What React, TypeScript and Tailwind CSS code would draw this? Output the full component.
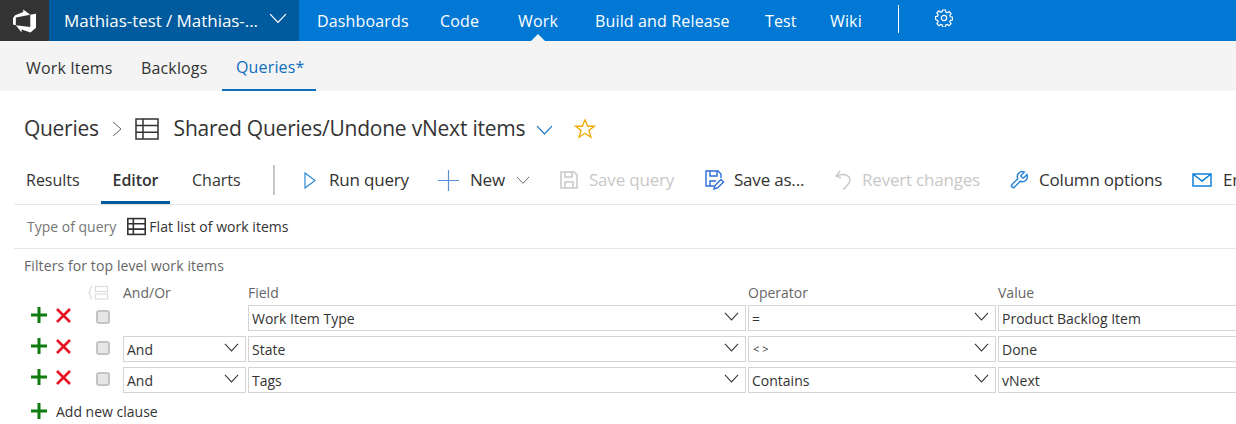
import React from "react";

const font = { fontFamily: '"Open Sans", "Noto Sans", sans-serif' };

function Chevron({ className = "", w = 16, color = "#333" }: { className?: string; w?: number; color?: string }) {
  return (
    <svg className={`shrink-0 ${className}`} width={w} height={w * 0.6} viewBox="0 0 16 9.6" fill="none" stroke={color} strokeWidth="1.1">
      <path d="M1 1 L8 8.4 L15 1" />
    </svg>
  );
}

function GridIcon({ size = 24, color = "#333" }: { size?: number; color?: string }) {
  return (
    <svg className="block" width={size} height={size} viewBox="0 0 24 24" fill="none" stroke={color} strokeWidth={size > 20 ? 1.5 : 2}>
      <rect x="1" y="2" width="22" height="20" />
      <path d="M1 8.6H23M1 15.3H23M8 2V22" />
    </svg>
  );
}

function Logo() {
  return (
    <svg width="23" height="24" viewBox="0 0 24 24" fill="white">
      <path d="M0 8.877L2.247 5.91l8.405-3.416V.022l7.37 5.393L2.966 8.338v8.225L0 15.707zm24-4.45v14.651l-5.753 4.9-9.303-3.057v3.056l-5.978-7.416 15.057 1.798V5.415z" />
    </svg>
  );
}

function Gear() {
  return (
    <svg className="block" width="18" height="18" viewBox="0 0 18 18" fill="none" stroke="white" strokeWidth="1.2">
      <circle cx="9" cy="9" r="2.7" />
      <path d="M7.6 1h2.8l.4 2.2 1.4.6 1.9-1.3 2 2-1.3 1.9.6 1.4 2.1.4v2.8l-2.1.4-.6 1.4 1.3 1.9-2 2-1.9-1.3-1.4.6-.4 2.1H7.6l-.4-2.1-1.4-.6-1.9 1.3-2-2 1.3-1.9-.6-1.4L.5 10.4V7.6l2.1-.4.6-1.4-1.3-1.9 2-2 1.9 1.3 1.4-.6z" />
    </svg>
  );
}

function Plus({ size = 16, color = "#107c10", sw = 3 }: { size?: number; color?: string; sw?: number }) {
  return (
    <svg className="block" width={size} height={size} viewBox="0 0 16 16" stroke={color} strokeWidth={sw} fill="none">
      <path d="M8 0V16M0 8H16" />
    </svg>
  );
}

function Cross() {
  return (
    <svg className="block" width="15" height="15" viewBox="0 0 15 15" stroke="#e81123" strokeWidth="2.6" fill="none">
      <path d="M1 1L14 14M14 1L1 14" />
    </svg>
  );
}

function Tool({ icon, label, disabled, w, after }: { icon: React.ReactNode; label: string; disabled?: boolean; w: string; after?: React.ReactNode }) {
  return (
    <div className={`flex items-center shrink-0 ${w}`}>
      {icon}
      <span className={`text-[17px] tracking-[-0.2px] whitespace-nowrap ${disabled ? "text-[#c8c8c8]" : "text-[#333]"}`}>{label}</span>
      {after}
    </div>
  );
}

function Select({ text, w, small }: { text: string; w: string; small?: boolean }) {
  return (
    <div className={`${w} h-[26px] shrink-0 border border-[#d4d4d4] bg-white flex items-center justify-between pl-[3px] pr-[6px]`}>
      <span className={`${small ? "text-[11px] pl-[1px]" : "text-[14px]"} text-[#333] whitespace-nowrap`}>{text}</span>
      <Chevron w={15} className="mb-[4px]" />
    </div>
  );
}

function Row({ first, field, op, value, opSmall }: { first?: boolean; field: string; op: string; value: string; opSmall?: boolean }) {
  return (
    <div className="flex items-center h-[26px] mb-[5px]">
      <div className="w-[47px] shrink-0 flex justify-end pb-[6px]"><Plus size={16} /></div>
      <div className="w-[39px] shrink-0 pl-[9px] pb-[6px]"><Cross /></div>
      <div className="w-[37px] shrink-0 pl-[10px] pb-[2px]">
        <div className="w-[14px] h-[14px] rounded-[3px] border-2 border-[#c4c4c4] bg-[#e6e6e6]" />
      </div>
      {first ? <div className="w-[123px] shrink-0" /> : <Select text="And" w="w-[123px]" />}
      <div className="w-[2px] shrink-0" />
      <Select text={field} w="w-[498px]" />
      <div className="w-[2px] shrink-0" />
      <Select text={op} w="w-[248px]" small={opSmall} />
      <div className="w-[2px] shrink-0" />
      <div className="h-[26px] flex-1 -mr-[10px] border border-[#d4d4d4] flex items-center pl-[3px]">
        <span className="text-[14px] text-[#333] whitespace-nowrap">{value}</span>
      </div>
    </div>
  );
}

const nav = [
  { t: "Dashboards", w: "w-[123px]" },
  { t: "Code", w: "w-[78px]" },
  { t: "Work", w: "w-[77px]" },
  { t: "Build and Release", w: "w-[170px]" },
  { t: "Test", w: "w-[65px]" },
  { t: "Wiki", w: "w-[68px]" },
];

export default function App() {
  return (
    <div style={font} className="w-[1236px] h-[424px] overflow-hidden bg-white">
      <div className="h-[41px] flex bg-[#0078d4] text-white">
        <div className="w-[49px] bg-[#333] flex items-center justify-center"><Logo /></div>
        <div className="w-[250px] bg-[#005a9e] flex items-center pl-[15px] pr-[12px] justify-between">
          <span className="text-[17px] tracking-[-0.05px] whitespace-nowrap">Mathias-test / Mathias-...</span>
          <Chevron w={18} color="white" className="mb-[4px]" />
        </div>
        <div className="flex items-center pl-[18px]">
          {nav.map((n) => (
            <div key={n.t} className={`${n.w} relative h-full flex items-center`}>
              <span className="text-[16px] tracking-[0.15px] whitespace-nowrap">{n.t}</span>
              {n.t === "Work" && (
                <span className="absolute left-[13px] bottom-0 w-0 h-0 border-l-[7px] border-r-[7px] border-b-[7px] border-l-transparent border-r-transparent border-b-[#f4f4f4]" />
              )}
            </div>
          ))}
          <div className="w-px h-[28px] bg-white mb-[3px]" />
          <div className="ml-[36px] mb-[6px]"><Gear /></div>
        </div>
      </div>

      <div className="h-[50px] bg-[#f4f4f4] flex pl-[26px] text-[16px] tracking-[0.15px]">
        <div className="w-[115px] flex items-center pt-[3px] text-[#333]">Work Items</div>
        <div className="w-[81px] flex items-center pt-[3px] text-[#333]">Backlogs</div>
        <div className="w-[94px] flex items-center pl-[14px] pt-[3px] text-[#106ebe] border-b-2 border-[#106ebe]">Queries*</div>
      </div>

      <div className="h-[74px] flex items-center pl-[24px] pt-[1px]">
        <span className="text-[21px] tracking-[-0.3px] text-[#333]">Queries</span>
        <svg className="ml-[13px]" width="10" height="16" viewBox="0 0 10 16" fill="none" stroke="#666" strokeWidth="1"><path d="M1 1L9 8L1 15" /></svg>
        <span className="ml-[13px] mr-[15px]"><GridIcon /></span>
        <span className="text-[21px] tracking-[-0.22px] text-[#333] whitespace-nowrap">Shared Queries/Undone vNext items</span>
        <Chevron className="ml-[11px] mt-[3px]" w={17} color="#106ebe" />
        <svg className="ml-[21px]" width="22" height="22" viewBox="0 0 24 24" fill="none" stroke="#f2a900" strokeWidth="1.4"><path d="M12 2l2.9 7h7.3l-5.9 4.6 2.2 7.4L12 16.6 5.5 21l2.2-7.4L1.8 9h7.3z" /></svg>
      </div>

      <div className="ml-[14px] h-[40px] border-b border-[#e6e6e6] flex items-start">
        <div className="w-[87px] pl-[12px] h-[30px] flex items-center text-[16px] text-[#333]">Results</div>
        <div className="w-[69px] h-[39px] pb-[6px] flex items-center justify-center text-[16px] font-semibold tracking-[-0.1px] text-[#333] border-b-[3px] border-[#005a9e]">Editor</div>
        <div className="w-[103px] pl-[22px] h-[30px] flex items-center text-[16px] text-[#333]">Charts</div>
        <div className="flex items-center h-[30px]">
          <div className="w-[2px] h-[30px] -mt-[1px] bg-[#c8c8c8] mr-[29px] shrink-0" />
          <Tool w="w-[134px]" label="Run query" icon={<svg className="mr-[13px]" width="12" height="17" viewBox="0 0 12 17" fill="none" stroke="#2b88d8" strokeWidth="1.2"><path d="M1 1L11 8.5L1 16Z" /></svg>} />
          <Tool w="w-[122px]" label="New"
            icon={<span className="mr-[11px]"><Plus size={21} color="#5a8fd8" sw={0.9} /></span>}
            after={<Chevron className="ml-[11px]" w={14} color="#666" />} />
          <Tool w="w-[145px]" label="Save query" disabled icon={<svg className="mr-[11px]" width="18" height="18" viewBox="0 0 18 18" fill="none" stroke="#c8c8c8" strokeWidth="1.5"><path d="M1 1H14L17 4V17H1Z" /><path d="M5 1V6H12V1M5 17V11H13V17" /></svg>} />
          <Tool w="w-[129px]" label="Save as..." icon={<svg className="mr-[9px]" width="20" height="20" viewBox="0 0 20 20" fill="none" stroke="#2b6cd8" strokeWidth="1.4"><path d="M9 16H1V1H13L16 4V8" /><path d="M5 1V6H12V1M5 16V11H11" /><path d="M9 19L10 15.5L16 9.5L18.5 12L12.5 18Z" /></svg>} />
          <Tool w="w-[175px]" label="Revert changes" disabled icon={<svg className="mr-[10px]" width="18" height="20" viewBox="0 0 18 20" fill="none" stroke="#c8c8c8" strokeWidth="1.4"><path d="M6 1L2 6L7 8M2 6C9 3 16 5 16 10C16 14 11 17 9 20" /></svg>} />
          <Tool w="w-[183px]" label="Column options" icon={<svg className="mr-[10px]" width="20" height="20" viewBox="0 0 24 24" fill="none" stroke="#2b88d8" strokeWidth="1.8"><path d="M14.7 6.3a1 1 0 0 0 0 1.4l1.6 1.6a1 1 0 0 0 1.4 0l3.77-3.77a6 6 0 0 1-7.94 7.94l-6.91 6.91a2.12 2.12 0 0 1-3-3l6.91-6.91a6 6 0 0 1 7.94-7.94l-3.76 3.76z" /></svg>} />
          <Tool w="w-[40px]" label="Email" icon={<svg className="mr-[11px] shrink-0" width="20" height="14" viewBox="0 0 20 14" fill="none" stroke="#0078d4" strokeWidth="1.4"><rect x="1" y="1" width="18" height="12" /><path d="M1 1L10 8L19 1" /></svg>} />
        </div>
      </div>

      <div className="ml-[14px] h-[44px] border-b border-[#e6e6e6] flex items-center pl-[13px]">
        <span className="text-[14px] text-[#767676]">Type of query</span>
        <span className="ml-[11px] mr-[3px]"><GridIcon size={19} /></span>
        <span className="text-[14px] tracking-[0.04px] text-[#333]">Flat list of work items</span>
      </div>

      <div className="pl-[24px] pt-[6px] h-[31px] text-[14px] tracking-[0.1px] text-[#666]">Filters for top level work items</div>

      <div className="flex items-center h-[25px] text-[14px] text-[#666]">
        <div className="w-[123px] pl-[88px]">
          <svg className="block" width="21" height="15" viewBox="0 0 21 15" fill="none" stroke="#dcdcdc" strokeWidth="1.2"><path d="M4 1C2 1 3 6 1 7.5C3 9 2 14 4 14" /><rect x="7.5" y="1.5" width="12" height="5" /><rect x="7.5" y="9" width="12" height="5" /></svg>
        </div>
        <div className="w-[125px]">And/Or</div>
        <div className="w-[500px]">Field</div>
        <div className="w-[250px]">Operator</div>
        <div>Value</div>
      </div>

      <Row first field="Work Item Type" op="=" value="Product Backlog Item" />
      <Row field="State" op="< >" value="Done" opSmall />
      <Row field="Tags" op="Contains" value="vNext" />

      <div className="flex items-center h-[26px]">
        <div className="w-[47px] shrink-0 flex justify-end"><Plus size={16} /></div>
        <span className="ml-[9px] text-[14px] text-[#333]">Add new clause</span>
      </div>
    </div>
  );
}
